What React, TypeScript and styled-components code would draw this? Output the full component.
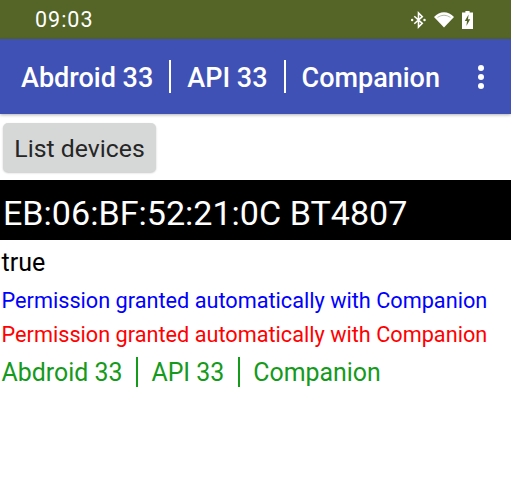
import React from 'react';
import styled, { createGlobalStyle } from 'styled-components';

const GlobalStyle = createGlobalStyle`
  html, body {
    margin: 0;
    padding: 0;
    background: #fff;
    font-family: Roboto, "Liberation Sans", sans-serif;
  }
`;

const Screen = styled.div`
  width: 511px;
  height: 488px;
  overflow: hidden;
  background: #fff;
`;

const StatusBar = styled.div`
  height: 39px;
  box-sizing: border-box;
  padding: 0 38px 0 35px;
  display: flex;
  align-items: center;
  justify-content: space-between;
  background: #546527;
  color: #fff;
  font-size: 21.5px;
  letter-spacing: 1px;
`;

const StatusIcons = styled.div`
  display: flex;
  align-items: center;
  gap: 8px;
`;

const AppBar = styled.header`
  height: 75px;
  box-sizing: border-box;
  padding: 0 25px 0 21px;
  display: flex;
  align-items: center;
  justify-content: space-between;
  background: #3f51b5;
  color: #fff;
  font-size: 27px;
  font-weight: 500;
  box-shadow: 0 1px 3px rgba(0, 0, 0, 0.3);
`;

const TitleRow = styled.div`
  display: inline-flex;
  align-items: center;
`;

const Word = styled.span<{ $shift: number }>`
  padding-top: ${(p) => p.$shift}px;
`;

const Divider = styled.span<{ $height: number; $margin: number }>`
  width: 2px;
  height: ${(p) => p.$height}px;
  margin: 0 ${(p) => p.$margin}px;
  background: currentColor;
`;

const Content = styled.main`
  padding: 9px 0 0;
  display: flex;
  flex-direction: column;
  align-items: flex-start;
`;

const ListButton = styled.button`
  width: 153px;
  height: 49px;
  margin-left: 3px;
  padding: 2px 0 0;
  border: 0;
  border-radius: 5px;
  background: #d6d7d7;
  color: #262626;
  font-family: inherit;
  font-size: 24.8px;
  box-shadow: 0 1px 2px rgba(0, 0, 0, 0.22);
`;

const DeviceRow = styled.div`
  width: 100%;
  height: 60px;
  margin-top: 8px;
  padding: 5px 0 0 3px;
  box-sizing: border-box;
  display: flex;
  align-items: center;
  background: #000;
  color: #fff;
  font-size: 34.1px;
`;

const Line = styled.div<{ $color: string; $size: number; $height: number }>`
  height: ${(p) => p.$height}px;
  display: flex;
  align-items: center;
  white-space: nowrap;
  color: ${(p) => p.$color};
  font-size: ${(p) => p.$size}px;
`;

const Lines = styled.div`
  padding: 5px 0 0 1.5px;
  display: flex;
  flex-direction: column;
`;

const BluetoothIcon = () => (
  <svg width="15" height="18" viewBox="1 0 16 18" fill="none" stroke="#fff" strokeWidth="1.7">
    <path d="M4.5 5 L13 12.5 L9 16.5 V1.5 L13 5.5 L4.5 13" />
    <circle cx="2.2" cy="9" r="1.3" fill="#fff" stroke="none" />
    <circle cx="15.4" cy="9" r="1.3" fill="#fff" stroke="none" />
  </svg>
);

const WifiIcon = () => (
  <svg width="20" height="17" viewBox="0 0 20 16">
    <path d="M0 5.6 C5.6 -0.8 14.4 -0.8 20 5.6 L10 16 Z" fill="#fff" />
    <path d="M3.2 5.8 C7 2.4 13 2.4 16.8 5.8 L16.3 6.3 C12.6 3.6 7.4 3.6 3.7 6.3 Z" fill="#546527" opacity="0.45" />
  </svg>
);

const BatteryIcon = () => (
  <svg width="11" height="18" viewBox="0 0 11 18">
    <path d="M3.4 0 H7.6 V1.6 H11 V18 H0 V1.6 H3.4 Z" fill="#fff" />
    <path d="M6.6 3.6 L2.8 10 H5 L4.4 15 L8.2 8.2 H6 Z" fill="#546527" />
  </svg>
);

const MoreIcon = () => (
  <svg width="10" height="24" viewBox="0 0 10 24" fill="#fff">
    <circle cx="5" cy="3" r="3" />
    <circle cx="5" cy="12" r="3" />
    <circle cx="5" cy="21" r="3" />
  </svg>
);

const Title = ({ height, margin, shift }: { height: number; margin: number; shift: number }) => (
  <TitleRow>
    <Word $shift={shift}>Abdroid 33</Word>
    <Divider $height={height} $margin={margin} />
    <Word $shift={shift}>API 33</Word>
    <Divider $height={height} $margin={margin} />
    <Word $shift={shift}>Companion</Word>
  </TitleRow>
);

export default function App() {
  return (
    <Screen>
      <GlobalStyle />
      <StatusBar>
        <span>09:03</span>
        <StatusIcons>
          <BluetoothIcon />
          <WifiIcon />
          <BatteryIcon />
        </StatusIcons>
      </StatusBar>
      <AppBar>
        <Title height={33} margin={16} shift={3} />
        <MoreIcon />
      </AppBar>
      <Content>
        <ListButton>List devices</ListButton>
        <DeviceRow>EB:06:BF:52:21:0C BT4807</DeviceRow>
        <Lines>
          <Line $color="#000" $size={25} $height={34}>true</Line>
          <Line $color="#0000ff" $size={21.7} $height={42}>Permission granted automatically with Companion</Line>
          <Line $color="#ff0000" $size={21.7} $height={26}>Permission granted automatically with Companion</Line>
          <Line $color="#159a1c" $size={24.9} $height={50}>
            <Title height={30} margin={13.5} shift={0} />
          </Line>
        </Lines>
      </Content>
    </Screen>
  );
}
